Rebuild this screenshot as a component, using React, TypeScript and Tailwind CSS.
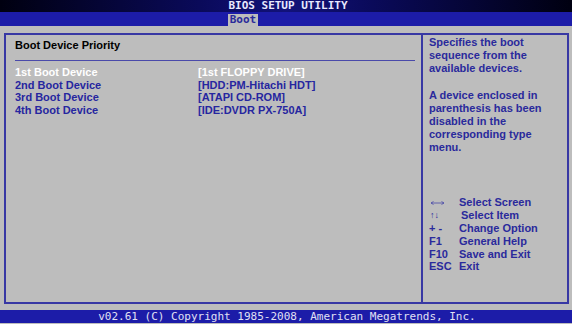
export default function App() {
  const devices = [
    ['1st Boot Device', '[1st FLOPPY DRIVE]'],
    ['2nd Boot Device', '[HDD:PM-Hitachi HDT]'],
    ['3rd Boot Device', '[ATAPI CD-ROM]'],
    ['4th Boot Device', '[IDE:DVDR PX-750A]'],
  ]
  const keys = [
    ['lr', 'Select Screen'],
    ['\u2191\u2193', 'Select Item'],
    ['+ -', 'Change Option'],
    ['F1', 'General Help'],
    ['F10', 'Save and Exit'],
    ['ESC', 'Exit'],
  ]

  return (
    <div className="w-[572px] h-[324px] bg-[#bdbdbd] flex flex-col overflow-hidden font-['Liberation_Sans',Arial,sans-serif]">
      {/* title */}
      <div className="h-[12px] bg-[linear-gradient(90deg,#000010_0%,#0a0a5a_35%,#12127a_50%,#0a0a5a_65%,#000010_100%)] flex justify-center">
        <span className="font-['DejaVu_Sans_Mono',monospace] font-bold text-[11px] leading-[12px] text-[#e8e8ff] ml-[4px]">BIOS SETUP UTILITY</span>
      </div>
      {/* tabs */}
      <div className="h-[14px] bg-[#1c1ca8] relative">
        <div className="absolute left-[228px] top-[2px] w-[30px] h-[12px] bg-[#bdbdbd] flex items-center justify-center">
          <span className="font-['DejaVu_Sans_Mono',monospace] font-bold text-[11px] leading-[12px] text-[#2a2a9a]">Boot</span>
        </div>
      </div>
      {/* main */}
      <div className="flex-1 pt-[7px] pl-[4px] pr-[3px] pb-[6px] flex">
        <div className="flex-1 border-2 border-[#3838a4] flex">
          <div className="w-[417px] border-r-2 border-[#3838a4] pl-[9px] pr-[6px]">
            <div className="text-[11px] font-bold text-black leading-[13px] pt-[4px]">Boot Device Priority</div>
            <div className="h-px bg-[#4a4aaa] mt-[8px] mb-[5px]"></div>
            {devices.map(([l, v], i) => (
              <div key={l} className={`flex text-[11px] font-bold leading-[12.6px] ${i === 0 ? 'text-white' : 'text-[#2626a0]'}`}>
                <span className="w-[183px]">{l}</span>
                <span>{v}</span>
              </div>
            ))}
          </div>
          <div className="flex-1 pl-[6px] pt-[1px] flex flex-col text-[11px] font-bold text-[#2a2a9c] leading-[13.2px]">
            <div>Specifies the boot<br />sequence from the<br />available devices.</div>
            <div className="mt-[13px]">A device enclosed in<br />parenthesis has been<br />disabled in the<br />corresponding type<br />menu.</div>
            <div className="mt-[42px]">
              {keys.map(([k, t], i) => (
                <div key={t} className="flex items-center h-[12.8px]">
                  <span className={`w-[30px] ${i === 1 ? 'font-normal text-[9px] pl-[1px]' : ''}`}>
                    {k === 'lr' ? (
                      <svg width="15" height="6" viewBox="0 0 15 6" className="ml-[1px]">
                        <path d="M1 3H14M1 3L3.5 1.5M1 3L3.5 4.5M14 3L11.5 1.5M14 3L11.5 4.5" stroke="#4a4aa8" strokeWidth="0.8" fill="none" />
                      </svg>
                    ) : k}
                  </span>
                  <span className={i === 1 ? 'pl-[2px]' : ''}>{t}</span>
                </div>
              ))}
            </div>
          </div>
        </div>
      </div>
      {/* footer */}
      <div className="h-[13px] bg-[#1c1ca8] flex justify-center mb-px">
        <span className="font-['DejaVu_Sans_Mono',monospace] text-[11px] leading-[13px] text-[#e0e0f4] ml-[2px]">v02.61 (C) Copyright 1985-2008, American Megatrends, Inc.</span>
      </div>
    </div>
  )
}
